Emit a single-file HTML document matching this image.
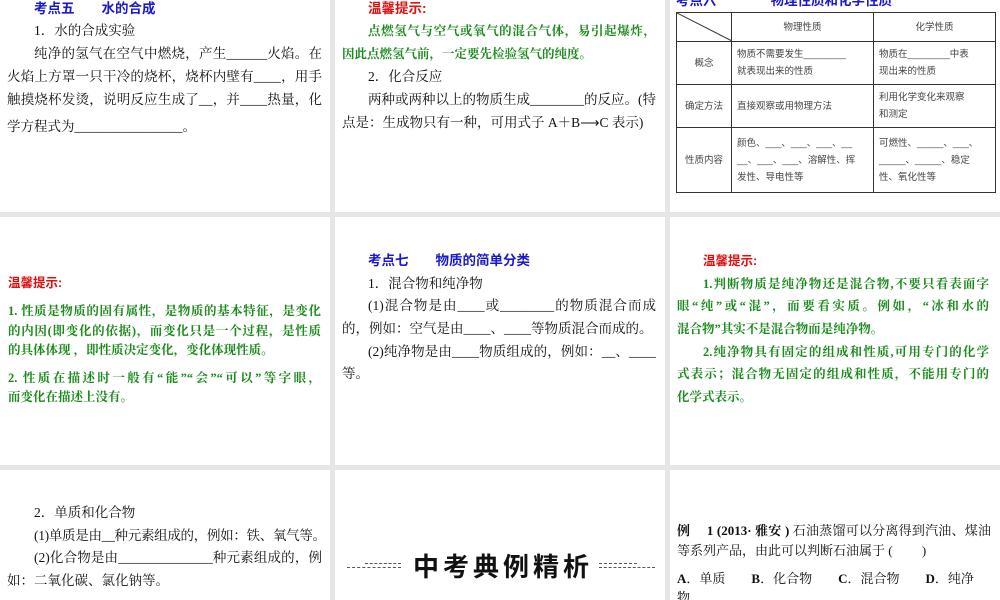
<!DOCTYPE html>
<html><head><meta charset="utf-8"><style>
body{margin:0;width:1000px;height:600px;background:#e6e6e6;position:relative;overflow:hidden;font-family:"Liberation Serif","Noto Serif CJK SC","Noto Sans CJK SC",serif;color:#111}
.s{position:absolute;background:#fff;overflow:hidden}
.l{position:absolute;white-space:nowrap;font-size:13.5px;line-height:18px}
.j{text-align:justify;text-align-last:justify}
.b{color:#1a1acc;font-weight:bold;font-family:"Liberation Sans","Noto Sans CJK SC",sans-serif}
.r{color:#e01010;font-weight:bold;font-family:"Liberation Sans","Noto Sans CJK SC",sans-serif}
.g{color:#1a8a1a;font-weight:bold;font-size:12.5px}
table{position:absolute;border-collapse:collapse;table-layout:fixed;font-family:"Liberation Sans","Noto Sans CJK SC",sans-serif;font-size:9.5px;color:#444}
td{border:1px solid #333;padding:0 5px;line-height:17px;vertical-align:middle;white-space:nowrap;overflow:hidden}
</style></head><body>
<div class="s" style="left:0;top:0;width:330px;height:212px">
<div class="l b" style="left:34px;top:0">考点五　　水的合成</div>
<div class="l" style="left:34px;top:22px">1．水的合成实验</div>
<div class="l j" style="left:34px;top:45px;width:288px">纯净的氢气在空气中燃烧，产生______火焰。在</div>
<div class="l j" style="left:7px;top:68px;width:315px">火焰上方罩一只干冷的烧杯，烧杯内壁有____，用手</div>
<div class="l j" style="left:7px;top:91px;width:315px">触摸烧杯发烫，说明反应生成了__，并____热量，化</div>
<div class="l" style="left:7px;top:118px">学方程式为________________。</div>
</div>
<div class="s" style="left:335px;top:0;width:330px;height:212px">
<div class="l r" style="left:33px;top:0">温馨提示:</div>
<div class="l g j" style="left:33px;top:22px;width:288px">点燃氢气与空气或氧气的混合气体，易引起爆炸，</div>
<div class="l g" style="left:7px;top:45px">因此点燃氢气前，一定要先检验氢气的纯度。</div>
<div class="l" style="left:33px;top:68px">2．化合反应</div>
<div class="l j" style="left:33px;top:91px;width:288px">两种或两种以上的物质生成________的反应。(特</div>
<div class="l" style="left:7px;top:114px">点是：生成物只有一种，可用式子 A＋B⟶C 表示)</div>
</div>
<div class="s" style="left:670px;top:0;width:330px;height:212px">
<div class="l b" style="left:6px;top:-8px">考点六　　　　物理性质和化学性质</div>
<table style="left:6px;top:12px;width:319px">
<colgroup><col style="width:55px"><col style="width:142px"><col style="width:122px"></colgroup>
<tr style="height:28px"><td style="padding:0"><svg width="55" height="28" style="display:block"><line x1="0" y1="0" x2="55" y2="28" stroke="#333"/></svg></td><td style="text-align:center">物理性质</td><td style="text-align:center">化学性质</td></tr>
<tr style="height:43px"><td style="text-align:center">概念</td><td>物质不需要发生________<br>就表现出来的性质</td><td>物质在________中表<br>现出来的性质</td></tr>
<tr style="height:43px"><td style="text-align:center;padding:0 3px">确定方法</td><td>直接观察或用物理方法</td><td>利用化学变化来观察<br>和测定</td></tr>
<tr style="height:65px"><td style="text-align:center;padding:0 3px">性质内容</td><td>颜色、___、___、___、__<br>__、___、___、溶解性、挥<br>发性、导电性等</td><td>可燃性、_____、___、<br>_____、_____、稳定<br>性、氧化性等</td></tr>
</table>
</div>
<div class="s" style="left:0;top:217px;width:330px;height:248px">
<div class="l r" style="left:8px;top:57px;font-size:12.5px">温馨提示:</div>
<div class="l g j" style="left:8px;top:85px;width:313px">1. 性质是物质的固有属性，是物质的基本特征，是变化</div>
<div class="l g j" style="left:8px;top:105px;width:313px">的内因(即变化的依据)，而变化只是一个过程，是性质</div>
<div class="l g" style="left:8px;top:124px">的具体体现 ，即性质决定变化，变化体现性质。</div>
<div class="l g j" style="left:8px;top:152px;width:313px">2. 性质在描述时一般有“能”“会”“可以”等字眼，</div>
<div class="l g" style="left:8px;top:171px">而变化在描述上没有。</div>
</div>
<div class="s" style="left:335px;top:217px;width:330px;height:248px">
<div class="l b" style="left:33px;top:35px">考点七　　物质的简单分类</div>
<div class="l" style="left:33px;top:58px">1．混合物和纯净物</div>
<div class="l j" style="left:33px;top:80px;width:288px">(1)混合物是由____或________的物质混合而成</div>
<div class="l" style="left:7px;top:103px">的，例如：空气是由____、____等物质混合而成的。</div>
<div class="l j" style="left:33px;top:126px;width:288px">(2)纯净物是由____物质组成的，例如：__、____</div>
<div class="l" style="left:7px;top:148px">等。</div>
</div>
<div class="s" style="left:670px;top:217px;width:330px;height:248px">
<div class="l r" style="left:33px;top:35px;font-size:12.5px">温馨提示:</div>
<div class="l g j" style="left:33px;top:58px;width:286px">1.判断物质是纯净物还是混合物,不要只看表面字</div>
<div class="l g j" style="left:7px;top:80px;width:312px">眼“纯”或“混”，而要看实质。例如，“冰和水的</div>
<div class="l g" style="left:7px;top:103px">混合物”其实不是混合物而是纯净物。</div>
<div class="l g j" style="left:33px;top:126px;width:286px">2.纯净物具有固定的组成和性质,可用专门的化学</div>
<div class="l g j" style="left:7px;top:148px;width:312px">式表示；混合物无固定的组成和性质，不能用专门的</div>
<div class="l g" style="left:7px;top:171px">化学式表示。</div>
</div>
<div class="s" style="left:0;top:470px;width:330px;height:130px">
<div class="l" style="left:34px;top:34px">2．单质和化合物</div>
<div class="l j" style="left:34px;top:57px;width:288px;letter-spacing:-0.3px">(1)单质是由__种元素组成的，例如：铁、氧气等。</div>
<div class="l j" style="left:34px;top:79px;width:288px">(2)化合物是由______________种元素组成的，例</div>
<div class="l" style="left:7px;top:102px">如：二氧化碳、氯化钠等。</div>
</div>
<div class="s" style="left:335px;top:470px;width:330px;height:130px">
<div style="position:absolute;left:12px;top:97px;width:54px;border-top:1px dashed #555"></div>
<div style="position:absolute;left:30px;top:93px;width:36px;border-top:1px dashed #555"></div>
<div class="l" style="left:78px;top:82px;font-size:26px;line-height:30px;font-weight:bold;letter-spacing:4px;font-family:'Liberation Sans','Noto Sans CJK SC',sans-serif;color:#111">中考典例精析</div>
<div style="position:absolute;left:264px;top:97px;width:56px;border-top:1px dashed #555"></div>
<div style="position:absolute;left:264px;top:93px;width:38px;border-top:1px dashed #555"></div>
</div>
<div class="s" style="left:670px;top:470px;width:330px;height:130px">
<div class="l j" style="left:7px;top:52px;width:314px;font-size:13px"><b>例　 1 (2013· 雅安 )</b> 石油蒸馏可以分离得到汽油、煤油</div>
<div class="l" style="left:7px;top:72px;font-size:13px">等系列产品，由此可以判断石油属于 (　　 )</div>
<div class="l" style="left:7px;top:100px;font-size:13px"><b>A</b>．单质　　<b>B</b>．化合物　　<b>C</b>．混合物　　<b>D</b>．纯净</div>
<div class="l" style="left:7px;top:119px;font-size:13px">物</div>
</div>
</body></html>
